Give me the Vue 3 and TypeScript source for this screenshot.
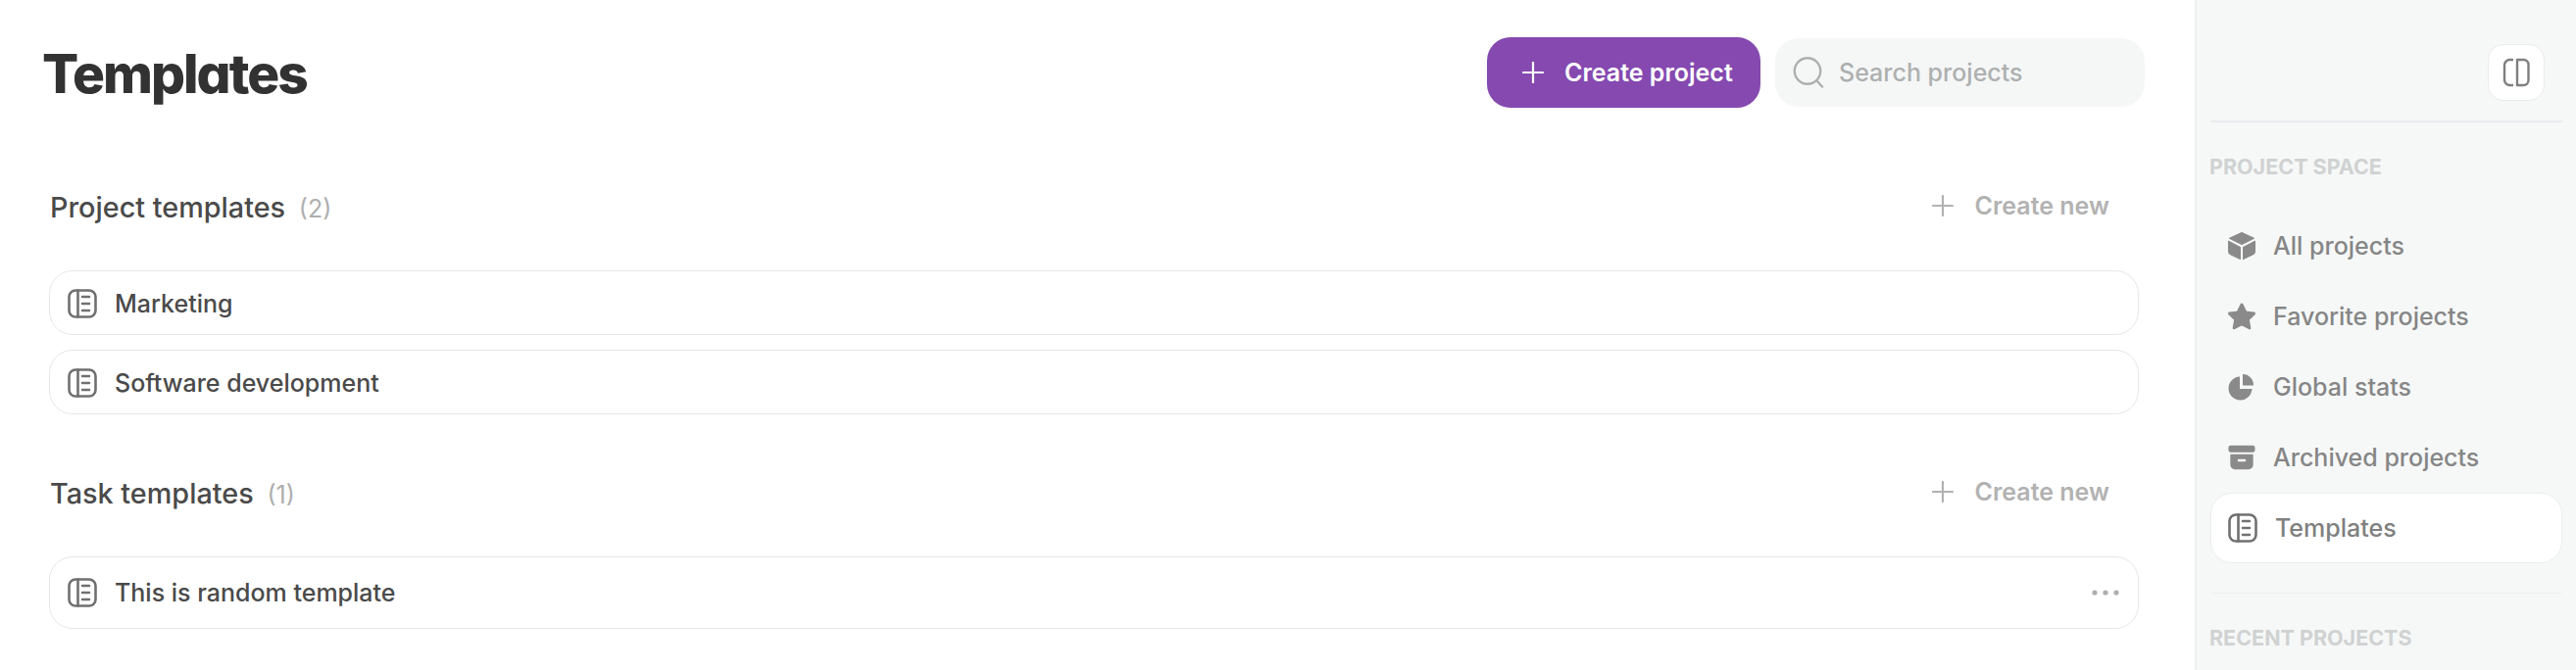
<script setup lang="ts">
interface Row { name: string; menu?: boolean }
const projectRows: Row[] = [{ name: 'Marketing' }, { name: 'Software development' }]
const taskRows: Row[] = [{ name: 'This is random template', menu: true }]
const nav = ['All projects', 'Favorite projects', 'Global stats', 'Archived projects', 'Templates']
</script>

<template>
  <div class="page">
    <main class="main">
      <header class="header">
        <h1 class="title">Templates</h1>
        <div class="actions">
          <button class="create">
            <svg class="plus" viewBox="0 0 22 22"><path d="M11 1v20M1 11h20" /></svg>
            <span>Create project</span>
          </button>
          <div class="search">
            <svg class="search-icon" viewBox="0 0 32 32"><circle cx="15" cy="14.5" r="13.2" /><path d="M25 25l5 5.5" /></svg>
            <span>Search projects</span>
          </div>
        </div>
      </header>

      <section class="section first">
        <div class="section-head">
          <h2>Project templates <span class="count">(2)</span></h2>
          <button class="create-new">
            <svg class="plus" viewBox="0 0 22 22"><path d="M11 1v20M1 11h20" /></svg>
            <span>Create new</span>
          </button>
        </div>
        <div class="rows">
          <div v-for="r in projectRows" :key="r.name" class="row">
            <svg class="tpl" viewBox="0 0 30 30"><rect x="1.5" y="1.5" width="27" height="27" rx="6.5" /><path d="M10.5 1.5v27M15 8h7M15 15h7M15 22h7" /></svg>
            <span>{{ r.name }}</span>
          </div>
        </div>
      </section>

      <section class="section second">
        <div class="section-head">
          <h2>Task templates <span class="count">(1)</span></h2>
          <button class="create-new">
            <svg class="plus" viewBox="0 0 22 22"><path d="M11 1v20M1 11h20" /></svg>
            <span>Create new</span>
          </button>
        </div>
        <div class="rows">
          <div v-for="r in taskRows" :key="r.name" class="row tall">
            <svg class="tpl" viewBox="0 0 30 30"><rect x="1.5" y="1.5" width="27" height="27" rx="6.5" /><path d="M10.5 1.5v27M15 8h7M15 15h7M15 22h7" /></svg>
            <span>{{ r.name }}</span>
            <svg class="dots" viewBox="0 0 28 6"><circle cx="3" cy="3" r="2.6" /><circle cx="14" cy="3" r="2.6" /><circle cx="25" cy="3" r="2.6" /></svg>
          </div>
        </div>
      </section>
    </main>

    <aside class="side">
      <div class="toolbar">
        <button class="panel-btn">
          <svg viewBox="0 0 28 30"><path d="M11 2H7.500A5.500 5.500 0 0 0 2 7.500v15A5.500 5.500 0 0 0 7.500 28H11" /><path d="M15 1v28M15 2h6.500A5 5 0 0 1 26.500 7v16a5 5 0 0 1-5 5H15" /></svg>
        </button>
      </div>
      <div class="label">PROJECT SPACE</div>
      <nav class="nav">
        <div v-for="(item, i) in nav" :key="item" class="item" :class="{ active: i === 4 }">
          <svg v-if="i === 0" class="ni" viewBox="0.5 0.5 27 27"><path d="M14 1L26 6.500 14 12.500 2 6.500Z" class="fs" /><path d="M1 9.500L12.500 15.300V27L3 22.500Q1 21.500 1 19.500Z" class="fs" /><path d="M27 9.500L15.500 15.300V27L25 22.500Q27 21.500 27 19.500Z" class="fs" /></svg>
          <svg v-else-if="i === 1" class="ni" viewBox="0.5 0.5 27 27"><path d="M14 2.500l3.700 7.600 8.300 1.100-6 5.800 1.500 8.300L14 21.300 6.500 25.300 8 17 2 11.200l8.300-1.100Z" class="fs thick" /></svg>
          <svg v-else-if="i === 2" class="ni" viewBox="0 0 28 28"><path d="M12 3.500A12 12 0 1 0 24.500 16H12Z" class="f" /><path d="M15 1A11 11 0 0 1 26 12.500H15Z" class="f" /></svg>
          <svg v-else-if="i === 3" class="ni" viewBox="0 0 30 28"><rect x="0.500" y="1" width="29" height="7.500" rx="2.500" class="f" /><path d="M2.500 10.500h25V22a5 5 0 0 1-5 5h-15a5 5 0 0 1-5-5Z" class="f" /><rect x="10.500" y="16" width="9" height="2.500" rx="1" fill="#f6f8f8" /></svg>
          <svg v-else class="ni tpl side-tpl" viewBox="0 0 30 30"><rect x="1.500" y="1.500" width="27" height="27" rx="6.500" /><path d="M10.500 1.500v27M15 8h7M15 15h7M15 22h7" /></svg>
          <span>{{ item }}</span>
        </div>
      </nav>
      <div class="rule"></div>
      <div class="label recent">RECENT PROJECTS</div>
    </aside>
  </div>
</template>

<style>
html, body { margin: 0; background: #fff; overflow: hidden; }
</style>

<style scoped>
.page {
  display: flex;
  width: 2628px;
  height: 684px;
  overflow: hidden;
  font-family: Inter, "Liberation Sans", sans-serif;
  background: #fff;
}
.main {
  flex: 1;
  min-width: 0;
  padding: 38px 51px 0 43px;
  box-sizing: border-box;
}
.header {
  display: flex;
  align-items: center;
  justify-content: space-between;
  height: 72px;
}
.title {
  margin: 0;
  padding-top: 3px;
  font-family: Inter, sans-serif;
  font-feature-settings: "cv11" 1;
  font-size: 55px;
  font-weight: 800;
  letter-spacing: -2px;
  line-height: 69px;
  color: #323232;
}
.actions { display: flex; align-items: center; gap: 15px; }
button { font-family: inherit; border: 0; padding: 0; background: none; }
.create {
  display: flex;
  align-items: center;
  width: 279px;
  height: 72px;
  padding-left: 36px;
  box-sizing: border-box;
  gap: 21px;
  border-radius: 24px;
  background: #8549b0;
  color: #fff;
  font-size: 25px;
  font-weight: 600;
}
.plus {
  width: 22px;
  height: 22px;
  fill: none;
  stroke: currentColor;
  stroke-width: 2.2;
  stroke-linecap: round;
  flex: none;
}
.search {
  display: flex;
  align-items: center;
  width: 377px;
  height: 70px;
  padding-left: 18px;
  box-sizing: border-box;
  gap: 15px;
  border-radius: 24px;
  background: #f5f7f7;
  color: #aeb0b0;
  font-size: 25px;
  font-weight: 500;
}
.search-icon {
  width: 32px;
  height: 32px;
  flex: none;
  fill: none;
  stroke: #aeb0b0;
  stroke-width: 2.4;
  stroke-linecap: round;
}
.section { padding: 0 6px 0 7px; }
.section.first { margin-top: 66px; }
.section.second { margin-top: 45px; }
.section-head {
  display: flex;
  align-items: center;
  justify-content: space-between;
  height: 70px;
  padding: 0 30px 0 1px;
  margin-bottom: 30px;
}
h2 {
  margin: 0;
  font-size: 28.800px;
  font-weight: 500;
  color: #4a4a4a;
}
.count {
  margin-left: 6px;
  font-size: 25px;
  font-weight: 400;
  color: #aeaeae;
}
.create-new {
  display: flex;
  align-items: center;
  gap: 21px;
  margin-bottom: 2px;
  color: #b2b2b2;
  font-size: 25px;
  font-weight: 600;
}
.rows { display: flex; flex-direction: column; gap: 15px; }
.row {
  display: flex;
  align-items: center;
  height: 66px;
  padding: 1px 19px 0 18px;
  box-sizing: border-box;
  gap: 18px;
  border: 1px solid #e6e7ea;
  border-radius: 24px;
  color: #4a4a4a;
  font-size: 25px;
  font-weight: 500;
}
.row.tall { height: 74px; padding-top: 0; }
.tpl {
  width: 30px;
  height: 30px;
  flex: none;
  fill: none;
  stroke: #707070;
  stroke-width: 2.600;
  stroke-linecap: round;
}
.dots { width: 28px; height: 6px; margin-left: auto; fill: #aeaeb0; }
.side {
  width: 389px;
  flex: none;
  box-sizing: border-box;
  padding: 0 14px 0 15px;
  border-left: 2px solid #eeeff0;
  background: #f6f8f8;
}
.toolbar {
  display: flex;
  justify-content: flex-end;
  padding: 45px 18px 20px 0;
  border-bottom: 2px solid #e9ebee;
  margin-left: -1px;
}
.panel-btn {
  display: flex;
  align-items: center;
  justify-content: center;
  width: 58px;
  height: 58px;
  background: #fff;
  border: 1px solid #e9ebee;
  border-radius: 16px;
}
.panel-btn svg {
  width: 28px;
  height: 30px;
  fill: none;
  stroke: #7f7f7f;
  stroke-width: 2.400;
}
.label {
  margin-top: 33px;
  margin-left: -2px;
  font-size: 21.500px;
  line-height: 24px;
  font-weight: 700;
  color: #d0d2d2;
}
.label.recent { margin-top: 33px; }
.nav { margin-top: 33px; margin-left: -1px; display: flex; flex-direction: column; }
.item {
  display: flex;
  align-items: center;
  height: 72px;
  padding-left: 18px;
  box-sizing: border-box;
  gap: 18px;
  color: #868686;
  font-size: 25px;
  font-weight: 500;
}
.item.active {
  background: #fff;
  border: 1px solid #eceeee;
  border-radius: 22px;
  padding-left: 17px;
  color: #808080;
  gap: 18px;
}
.ni { width: 28px; height: 28px; flex: none; }
.ni.side-tpl { width: 30px; height: 30px; }
.f { fill: #8a8a8a; }
.fs { fill: #8a8a8a; stroke: #8a8a8a; stroke-width: 1; stroke-linejoin: round; }
.fs.thick { stroke-width: 3; }
.rule { height: 1px; margin: 30px 0 0 -1px; background: #eceef0; }
</style>
